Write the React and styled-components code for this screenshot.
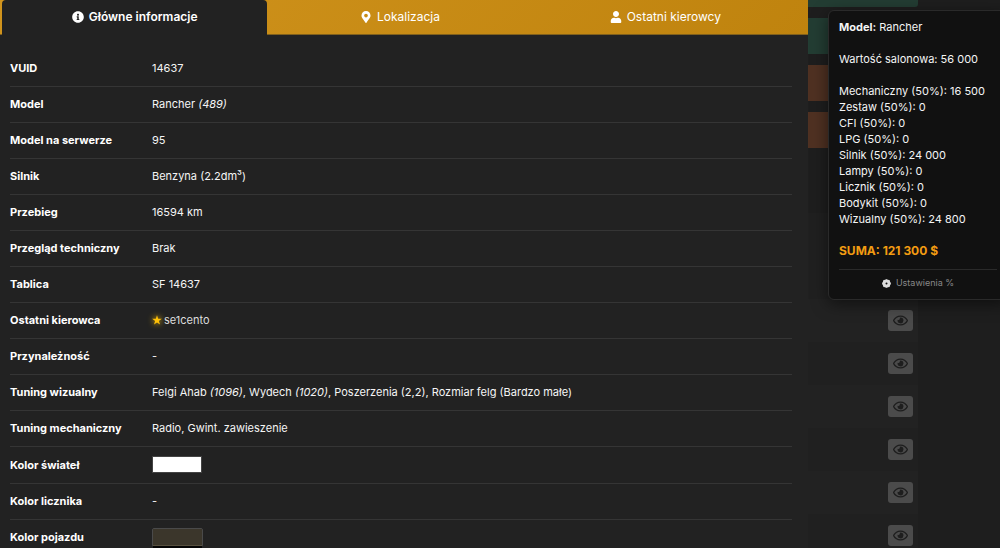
import styled, { createGlobalStyle, css } from 'styled-components'
import { FaInfoCircle, FaMapMarkerAlt, FaUser, FaRegEye } from 'react-icons/fa'

const rows = [
  { label: 'VUID', value: '14637' },
  { label: 'Model', value: <>Rancher <i>(489)</i></> },
  { label: 'Model na serwerze', value: '95' },
  { label: 'Silnik', value: 'Benzyna (2.2dm³)' },
  { label: 'Przebieg', value: '16594 km' },
  { label: 'Przegląd techniczny', value: 'Brak' },
  { label: 'Tablica', value: 'SF 14637' },
  { label: 'Ostatni kierowca', value: <Driver name="se1cento" /> },
  { label: 'Przynależność', value: '-' },
  {
    label: 'Tuning wizualny',
    value: <>Felgi Ahab <i>(1096)</i>, Wydech <i>(1020)</i>, Poszerzenia (2,2), Rozmiar felg (Bardzo małe)</>,
  },
  { label: 'Tuning mechaniczny', value: 'Radio, Gwint. zawieszenie' },
  { label: 'Kolor świateł', value: <LightColor />, tall: true },
  { label: 'Kolor licznika', value: '-' },
  { label: 'Kolor pojazdu', value: <VehicleColors /> },
]

const prices = [
  ['Mechaniczny', '16 500'],
  ['Zestaw', '0'],
  ['CFI', '0'],
  ['LPG', '0'],
  ['Silnik', '24 000'],
  ['Lampy', '0'],
  ['Licznik', '0'],
  ['Bodykit', '0'],
  ['Wizualny', '24 800'],
]

function Driver({ name }) {
  return (
    <DriverLink href="#driver">
      <Star viewBox="0 0 20 20" aria-hidden="true">
        <path d="M10 0.5 12.4 7.4 19.6 7.5 13.8 11.9 16 19 10 14.8 4 19 6.2 11.9 0.4 7.5 7.6 7.4Z" />
      </Star>
      {name}
    </DriverLink>
  )
}

function Gear() {
  const teeth = [0, 45, 90, 135, 180, 225, 270, 315]
  return (
    <svg width="9" height="9" viewBox="0 0 18 18" fill="currentColor" aria-hidden="true">
      {teeth.map((angle) => (
        <rect key={angle} x="6.7" y="0.3" width="4.6" height="5" rx="1.4" transform={`rotate(${angle} 9 9)`} />
      ))}
      <circle cx="9" cy="9" r="4.8" fill="none" stroke="currentColor" strokeWidth="5.6" />
    </svg>
  )
}

function LightColor() {
  return <Swatch />
}

function VehicleColors() {
  return (
    <ColorStack>
      <ColorBar $color="#3b362b" />
      <ColorBar $color="#050505" />
    </ColorStack>
  )
}

function App() {
  return (
    <>
      <GlobalStyle />
      <Page>
        <Panel>
          <Tabs role="tablist">
            <Tab role="tab" aria-selected="true" $active><FaInfoCircle />Główne informacje</Tab>
            <Tab role="tab" aria-selected="false"><FaMapMarkerAlt />Lokalizacja</Tab>
            <Tab role="tab" aria-selected="false"><FaUser />Ostatni kierowcy</Tab>
          </Tabs>
          <Details>
            <tbody>
              {rows.map((row) => (
                <Row key={row.label} $tall={row.tall}>
                  <Label scope="row">{row.label}</Label>
                  <Value>{row.value}</Value>
                </Row>
              ))}
            </tbody>
          </Details>
        </Panel>

        <Side>
          <Background>
            <Actions>
              <Action $short aria-label="Akcja 1" />
              <Action aria-label="Akcja 2" />
              <Action $danger aria-label="Akcja 3" />
              <Action $danger aria-label="Akcja 4" />
            </Actions>
            <List>
              {[1, 2, 3, 4, 5, 6].map((n) => (
                <ListRow key={n}>
                  <EyeButton aria-label="Podgląd"><FaRegEye /></EyeButton>
                </ListRow>
              ))}
            </List>
          </Background>

          <Popup>
            <Line><b>Model:</b> Rancher</Line>
            <Line>Wartość salonowa: 56 000</Line>
            <Prices>
              {prices.map(([name, price]) => (
                <li key={name}>{name} (50%): {price}</li>
              ))}
            </Prices>
            <Sum>SUMA: 121 300 $</Sum>
            <PopupFooter>
              <Settings><Gear />Ustawienia %</Settings>
            </PopupFooter>
          </Popup>
        </Side>
      </Page>
    </>
  )
}

const GlobalStyle = createGlobalStyle`
  * {
    box-sizing: border-box;
  }
  body {
    margin: 0;
    background: #1e1e1e;
    color: #f5f5f5;
    font-family: Inter, "Liberation Sans", sans-serif;
    font-size: 11px;
    line-height: 16px;
    overflow: hidden;
  }
  button {
    font: inherit;
    color: inherit;
    border: 0;
    padding: 0;
    cursor: pointer;
  }
`

const Page = styled.main`
  display: flex;
  height: 100vh;
  overflow: hidden;
`

const Panel = styled.section`
  flex: 1;
  min-width: 0;
  background: #222;
  overflow: hidden;
`

const Tabs = styled.div`
  display: grid;
  grid-template-columns: 1fr 1fr 1fr;
  padding: 0 10px 0 2px;
  background: linear-gradient(135deg, #d1941d, #bf830e);
  border-bottom: 1px solid #80601d;
`

const Tab = styled.button`
  display: flex;
  align-items: center;
  justify-content: center;
  gap: 5px;
  height: 34px;
  margin-bottom: -1px;
  font-size: 12px;
  font-weight: 400;
  color: #fff;
  background: none;
  border-radius: 4px 4px 0 0;

  ${(props) => props.$active && css`
    height: 35px;
    padding-bottom: 2px;
    font-weight: 600;
    background: #222;
  `}
`

const Details = styled.table`
  width: calc(100% - 26px);
  margin: 15px 16px 0 10px;
  border-collapse: collapse;
  text-align: left;
  table-layout: fixed;
`

const Row = styled.tr`
  height: ${(props) => (props.$tall ? '37px' : '36px')};
  border-bottom: 1px solid #353535;
`

const Label = styled.th`
  width: 142px;
  padding: 0;
  font-weight: 700;
  color: #fff;
`

const Value = styled.td`
  padding: 0;
  font-weight: 400;
`

const DriverLink = styled.a`
  display: flex;
  align-items: center;
  gap: 2px;
  color: #ddd;
  text-decoration: none;
`

const Star = styled.svg`
  width: 10px;
  height: 10px;
  fill: #ffc107;
  filter: drop-shadow(0 0 3px #ffc107);
`

const Swatch = styled.div`
  width: 50px;
  height: 17px;
  background: #fff;
  border: 1px solid #444;
`

const ColorStack = styled.div`
  width: 51px;
  height: 19px;
  border: 1px solid #4a4a4a;
  border-radius: 2px;
`

const ColorBar = styled.div`
  height: 17px;
  background: ${(props) => props.$color};
  border-bottom: 1px solid #57503f;
`

const Side = styled.aside`
  position: relative;
  width: 192px;
  flex: none;
`

const Background = styled.div`
  width: 110px;
  background: #202020;
`

const Actions = styled.div`
  display: flex;
  flex-direction: column;
  gap: 11px;
  padding-bottom: 65px;
  background: #1e1e1e;
`

const Action = styled.button`
  height: ${(props) => (props.$short ? '7px' : '36px')};
  background: ${(props) => (props.$danger ? '#4f3122' : '#233d33')};
  border-radius: ${(props) => (props.$short ? '0 0 3px 0' : '0 3px 3px 0')};
`

const List = styled.div`
  padding-top: 86px;
`

const ListRow = styled.div`
  display: flex;
  align-items: center;
  justify-content: flex-end;
  height: 43px;
  padding-right: 5px;

  &:nth-child(odd) {
    background: #222;
  }
`

const EyeButton = styled.button`
  display: flex;
  align-items: center;
  justify-content: center;
  width: 25px;
  height: 21px;
  background: #4b4b4b;
  border-radius: 3px;
  color: #1e1e1e;
  font-size: 15px;
`

const Popup = styled.div`
  position: absolute;
  top: 10px;
  right: -8px;
  width: 180px;
  padding: 8px 10px;
  background: #111;
  border: 1px solid #2a2a2a;
  border-radius: 6px;
  box-shadow: 0 4px 16px rgba(0, 0, 0, 0.5);
`

const Line = styled.p`
  margin: 0 0 16px;
`

const Prices = styled.ul`
  margin: 0 0 16px;
  padding: 0;
  list-style: none;
`

const Sum = styled.div`
  font-size: 12px;
  font-weight: 700;
  color: #f39c12;
`

const PopupFooter = styled.div`
  display: flex;
  justify-content: center;
  margin-top: 10px;
  padding-top: 5px;
  border-top: 1px solid #2a2a2a;
`

const Settings = styled.button`
  display: flex;
  align-items: center;
  gap: 5px;
  font-size: 9px;
  line-height: 16px;
  color: #888;
  background: none;

  svg {
    color: #ddd;
  }
`

export default App
